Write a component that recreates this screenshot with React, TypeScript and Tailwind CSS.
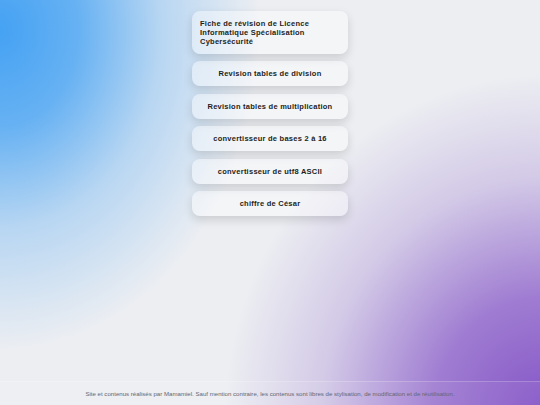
const LINKS = [
  'Revision tables de division',
  'Revision tables de multiplication',
  'convertisseur de bases 2 à 16',
  'convertisseur de utf8 ASCII',
  'chiffre de César',
];

export default function App() {
  return (
    <div
      className="flex min-h-screen flex-col bg-[#eceef2] bg-[radial-gradient(ellipse_260px_320px_at_0px_30px,#45a2f3_0%,rgba(69,162,243,0.8)_30%,rgba(120,185,242,0.45)_62%,rgba(236,238,242,0)_100%),radial-gradient(ellipse_320px_340px_at_545px_415px,#8454c6_0%,rgba(134,87,199,0.75)_35%,rgba(165,135,210,0.35)_70%,rgba(236,238,242,0)_100%)] font-['Liberation_Sans',Arial,sans-serif]"
    >
      {/* liens */}
      <main className="flex flex-1 flex-col items-center gap-[7.5px] pt-[11px]">
        <a className="block w-[156px] rounded-lg bg-white/40 px-2 pt-2 pb-[7.5px] text-[7.5px] font-bold leading-[9px] tracking-[0.25px] text-[#1e1e22] shadow-[0_4px_10px_rgba(0,0,0,0.14)]">
          Fiche de révision de Licence Informatique Spécialisation Cybersécurité
        </a>
        {LINKS.map((label) => (
          <a
            key={label}
            className="block w-[156px] rounded-lg bg-white/40 px-2 py-2 text-center text-[7.5px] font-bold leading-[9px] tracking-[0.25px] text-[#1e1e22] shadow-[0_4px_10px_rgba(0,0,0,0.14)]"
          >
            {label}
          </a>
        ))}
      </main>

      {/* pied de page */}
      <footer className="flex h-[24px] items-center justify-center border-t border-white/20 bg-white/5 text-[6.1px] text-[#66666f]">
        Site et contenus réalisés par Mamamiel. Sauf mention contraire, les contenus sont libres de stylisation, de modification et de réutilisation.
      </footer>
    </div>
  );
}
